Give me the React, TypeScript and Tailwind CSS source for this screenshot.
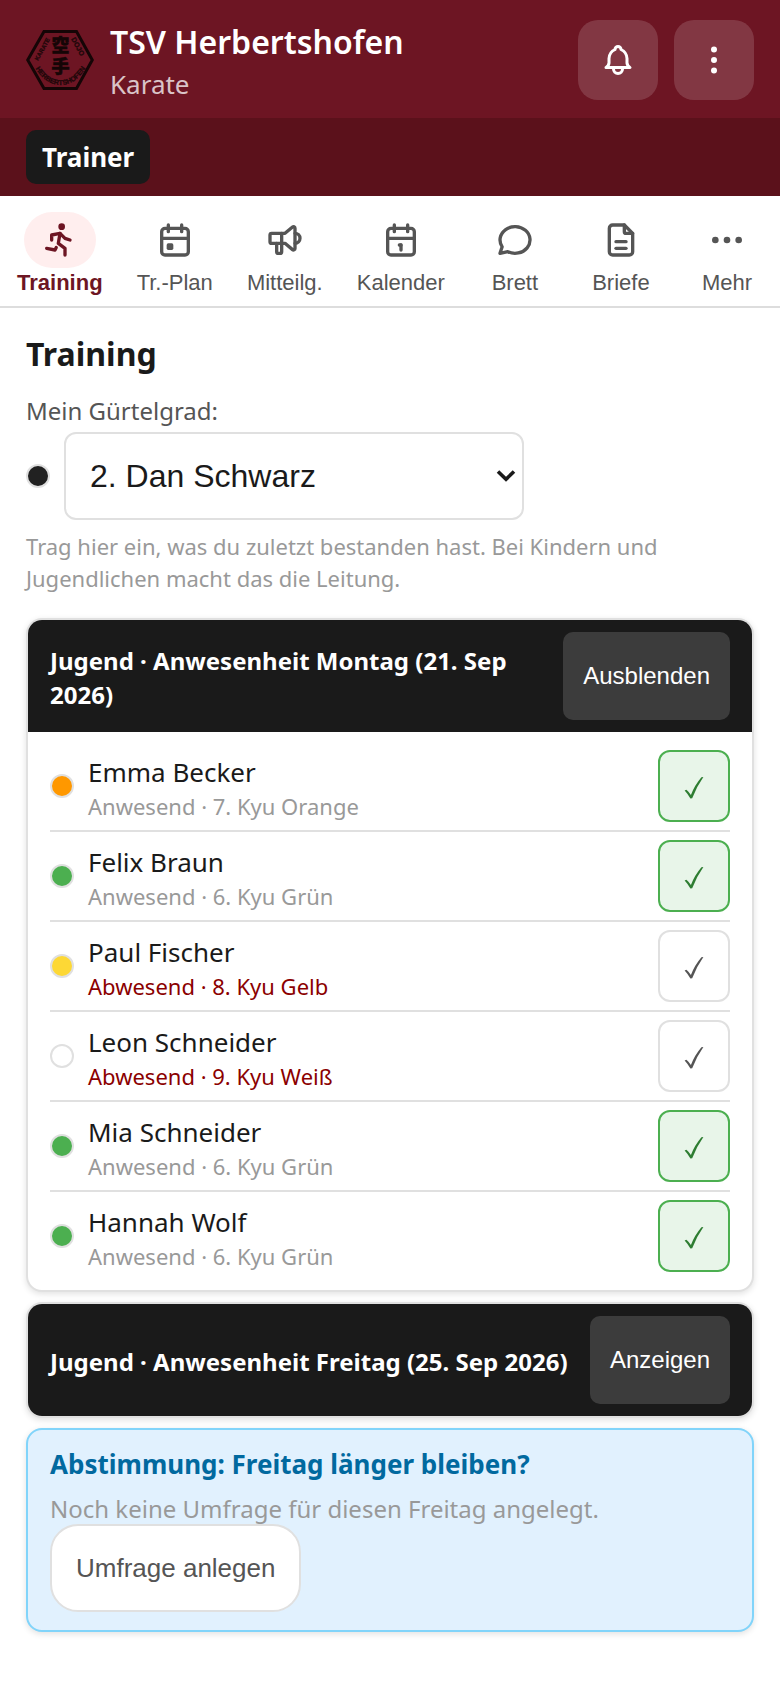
import { useState } from 'react';
import {
  TbBell,
  TbCalendar,
  TbCalendarEvent,
  TbDots,
  TbDotsVertical,
  TbFileDescription,
  TbMessageCircle,
  TbRun,
  TbSpeakerphone,
} from 'react-icons/tb';
import type { IconType } from 'react-icons';
import clsx from 'clsx';

interface Tab {
  label: string;
  icon: IconType;
}

interface Member {
  name: string;
  grade: string;
  belt: string;
  present: boolean;
}

const tabs: Tab[] = [
  { label: 'Training', icon: TbRun },
  { label: 'Tr.-Plan', icon: TbCalendarEvent },
  { label: 'Mitteilg.', icon: TbSpeakerphone },
  { label: 'Kalender', icon: TbCalendar },
  { label: 'Brett', icon: TbMessageCircle },
  { label: 'Briefe', icon: TbFileDescription },
  { label: 'Mehr', icon: TbDots },
];

const initialMembers: Member[] = [
  { name: 'Emma Becker', grade: '7. Kyu Orange', belt: 'bg-[#ff9800]', present: true },
  { name: 'Felix Braun', grade: '6. Kyu Grün', belt: 'bg-[#4caf50]', present: true },
  { name: 'Paul Fischer', grade: '8. Kyu Gelb', belt: 'bg-[#fdd835]', present: false },
  { name: 'Leon Schneider', grade: '9. Kyu Weiß', belt: 'bg-white', present: false },
  { name: 'Mia Schneider', grade: '6. Kyu Grün', belt: 'bg-[#4caf50]', present: true },
  { name: 'Hannah Wolf', grade: '6. Kyu Grün', belt: 'bg-[#4caf50]', present: true },
];

const grades = ['1. Dan Schwarz', '2. Dan Schwarz', '3. Dan Schwarz'];

function Logo() {
  return (
    <svg className="h-15 w-17 shrink-0" viewBox="0 0 68 60" role="img" aria-label="Karate Dojo Herbertshofen">
      <path d="M18 1.5H50.5L66.3 30L50.5 58.5H18L1.7 30Z" fill="none" stroke="#150506" strokeWidth="3" />
      <defs>
        <path id="logo-left" d="M12 31L25 8" />
        <path id="logo-right" d="M45 9L57 31" />
        <path id="logo-bottom" d="M7 34Q18 55 34.5 55Q51 55 62 34" />
      </defs>
      <g
        fill="#1c0709"
        stroke="#1c0709"
        strokeWidth="0.3"
        fontFamily="'Liberation Sans', sans-serif"
        fontWeight="700"
        fontSize="7"
      >
        <text fontSize="6">
          <textPath href="#logo-left">KARATE</textPath>
        </text>
        <text>
          <textPath href="#logo-right">DOJO</textPath>
        </text>
        <text textAnchor="middle">
          <textPath href="#logo-bottom" startOffset="50%">
            HERBERTSHOFEN
          </textPath>
        </text>
      </g>
      <g
        fill="#150506"
        stroke="#150506"
        strokeWidth="0.6"
        fontFamily="'Noto Sans CJK JP', sans-serif"
        fontWeight="900"
        fontSize="18"
        textAnchor="middle"
      >
        <text x="34.5" y="22">
          空
        </text>
        <text x="34.5" y="43">
          手
        </text>
      </g>
    </svg>
  );
}

function BeltDot({ color }: { color: string }) {
  return <span className={clsx('size-6 shrink-0 rounded-full border-2 border-[#e0e0e0]', color)} />;
}

function CheckMark() {
  return (
    <svg className="h-6 w-5" viewBox="0 0 20 24" fill="currentColor" aria-hidden="true">
      <path d="M.6 14.6L2.4 13.8Q4.3 15 6.9 18.9Q10.6 9.4 17.4 1.3L19.4 1Q12.6 10.6 8.2 22.3L6.4 22.5Q3.6 17.8.6 14.6Z" />
    </svg>
  );
}

function Header() {
  return (
    <header>
      <div className="flex items-center gap-4 bg-[#6d1523] px-6.5 pt-5 pb-4.5">
        <Logo />
        <div className="-mb-1 flex-1 text-white">
          <p className="text-[32px] leading-11 font-semibold">TSV Herbertshofen</p>
          <p className="text-[26px] leading-10 text-white/75">Karate</p>
        </div>
        <button
          type="button"
          aria-label="Benachrichtigungen"
          className="grid size-20 cursor-pointer place-items-center rounded-[20px] bg-white/15 text-white"
        >
          <TbBell className="size-9" />
        </button>
        <button
          type="button"
          aria-label="Menü"
          className="grid size-20 cursor-pointer place-items-center rounded-[20px] bg-white/15 text-white"
        >
          <TbDotsVertical className="size-9" />
        </button>
      </div>
      <div className="flex bg-[#5b111b] px-6.5 py-3">
        <span className="rounded-[10px] bg-[#1a1a1a] px-4 py-2 text-[26px] leading-[38px] font-bold text-white">
          Trainer
        </span>
      </div>
    </header>
  );
}

function TabBar() {
  const [active, setActive] = useState('Training');

  return (
    <nav className="flex border-b-2 border-[#dddddd] pt-4 pb-2 font-['Liberation_Sans',Arial,sans-serif]">
      {tabs.map(({ label, icon: Icon }) => (
        <button
          key={label}
          type="button"
          onClick={() => setActive(label)}
          className={clsx(
            'flex flex-auto cursor-pointer flex-col items-center text-[22px] leading-[30px]',
            label === active ? 'font-bold text-[#6d1523]' : 'text-[#555555]',
          )}
        >
          <span className={clsx('grid h-14 w-18 place-items-center rounded-full', label === active && 'bg-[#ffeeee]')}>
            <Icon className="size-10" />
          </span>
          {label}
        </button>
      ))}
    </nav>
  );
}

function GradeSelect() {
  const [grade, setGrade] = useState('2. Dan Schwarz');

  return (
    <div>
      <label htmlFor="grade" className="block text-2xl leading-[42px] text-[#555555]">
        Mein Gürtelgrad:
      </label>
      <div className="flex items-center gap-3.5">
        <BeltDot color="bg-[#212121]" />
        <div className="relative w-full max-w-[460px]">
          <select
            id="grade"
            value={grade}
            onChange={(e) => setGrade(e.target.value)}
            className="h-22 w-full cursor-pointer appearance-none rounded-xl border-2 border-[#e0e0e0] bg-white px-6 font-['Liberation_Sans',Arial,sans-serif] text-[32px] text-[#1a1a1a]"
          >
            {grades.map((g) => (
              <option key={g}>{g}</option>
            ))}
          </select>
          <svg
            className="pointer-events-none absolute inset-y-0 right-2 my-auto h-3 w-5"
            viewBox="0 0 20 12"
            fill="none"
            stroke="#1a1a1a"
            strokeWidth="3.6"
          >
            <path d="M2 1.5L10 9.3L18 1.5" />
          </svg>
        </div>
      </div>
      <p className="mt-2.5 text-[22px] leading-8 text-[#999999]">
        Trag hier ein, was du zuletzt bestanden hast. Bei Kindern und Jugendlichen macht das die Leitung.
      </p>
    </div>
  );
}

interface AttendanceCardProps {
  title: string;
  members: Member[];
  defaultOpen?: boolean;
}

function AttendanceCard({ title, members, defaultOpen = false }: AttendanceCardProps) {
  const [open, setOpen] = useState(defaultOpen);
  const [list, setList] = useState(members);

  const toggle = (name: string) =>
    setList((prev) => prev.map((m) => (m.name === name ? { ...m, present: !m.present } : m)));

  return (
    <section className="overflow-hidden rounded-2xl border-2 border-[#e0e0e0] bg-white shadow-[0_2px_6px_rgba(0,0,0,0.12)]">
      <div className="flex items-center justify-between gap-3 bg-[#1a1a1a] px-5.5 py-3">
        <h2 className="pt-1 text-2xl leading-[34px] font-bold text-white">{title}</h2>
        <button
          type="button"
          onClick={() => setOpen(!open)}
          className="h-22 shrink-0 cursor-pointer rounded-[10px] bg-white/15 px-5 font-['Liberation_Sans',Arial,sans-serif] text-2xl text-white"
        >
          {open ? 'Ausblenden' : 'Anzeigen'}
        </button>
      </div>
      {open && (
        <ul className="px-5.5 py-2.5">
          {list.map((m) => (
            <li key={m.name} className="flex items-center gap-3.5 border-b-2 border-[#e0e0e0] py-2 last:border-b-0">
              <BeltDot color={m.belt} />
              <div className="flex-1 pt-1">
                <p className="text-[26px] leading-9 text-[#1a1a1a]">{m.name}</p>
                <p className={clsx('text-[22px] leading-8', m.present ? 'text-[#999999]' : 'text-[#8b0000]')}>
                  {`${m.present ? 'Anwesend' : 'Abwesend'} · ${m.grade}`}
                </p>
              </div>
              <button
                type="button"
                aria-label={`${m.name} anwesend`}
                aria-pressed={m.present}
                onClick={() => toggle(m.name)}
                className={clsx(
                  'grid size-18 cursor-pointer place-items-center rounded-xl border-2 pt-1',
                  m.present ? 'border-[#4caf50] bg-[#e8f5e9] text-[#2e7d32]' : 'border-[#e0e0e0] bg-white text-[#555555]',
                )}
              >
                <CheckMark />
              </button>
            </li>
          ))}
        </ul>
      )}
    </section>
  );
}

function PollCard() {
  return (
    <section className="rounded-2xl border-2 border-[#81d4fa] bg-[#e1f1fe] px-5.5 py-4.5 shadow-[0_2px_6px_rgba(0,0,0,0.12)]">
      <h2 className="text-[26px] leading-8 font-bold text-[#01699f]">Abstimmung: Freitag länger bleiben?</h2>
      <p className="mt-3.5 text-2xl leading-[30px] text-[#999999]">Noch keine Umfrage für diesen Freitag angelegt.</p>
      <button
        type="button"
        className="h-22 cursor-pointer rounded-[28px] border-2 border-[#e0e0e0] bg-white px-6 font-['Liberation_Sans',Arial,sans-serif] text-[26px] text-[#555555]"
      >
        Umfrage anlegen
      </button>
    </section>
  );
}

export default function App() {
  return (
    <div className="min-h-screen bg-white font-['Segoe_UI','Noto_Sans',sans-serif] text-[#1a1a1a]">
      <Header />
      <TabBar />
      <main className="flex flex-col gap-3 px-6.5 py-5.5">
        <h1 className="text-[32px] leading-12 font-bold">Training</h1>
        <GradeSelect />
        <div className="mt-3 flex flex-col gap-2.5">
          <AttendanceCard title="Jugend · Anwesenheit Montag (21. Sep 2026)" members={initialMembers} defaultOpen />
          <AttendanceCard title="Jugend · Anwesenheit Freitag (25. Sep 2026)" members={initialMembers} />
          <PollCard />
        </div>
      </main>
    </div>
  );
}
